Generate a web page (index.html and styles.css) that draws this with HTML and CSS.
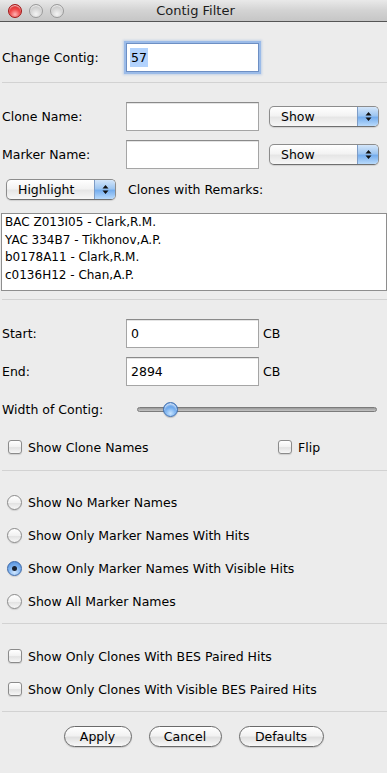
FILE: index.html
```html
<!DOCTYPE html>
<html lang="en">
<head>
    <meta charset="UTF-8">
    <meta name="viewport" content="width=device-width, initial-scale=1.0">
    <title>Contig Filter</title>
    <link rel="stylesheet" href="styles.css">
</head>
<body>
    <div class="window">
        <div class="titlebar">
            <div class="lights">
                <span class="light light-close"></span>
                <span class="light"></span>
                <span class="light"></span>
            </div>
            <div class="title">Contig Filter</div>
        </div>

        <div class="content">
            <div class="row row-contig">
                <div class="label">Change Contig:</div>
                <div class="field field-focus"><span class="selected">57</span></div>
            </div>
            <div class="sep sep-top"></div>

            <div class="row row-clone">
                <div class="label">Clone Name:</div>
                <div class="field"></div>
                <div class="popup popup-show">
                    <span class="popup-text">Show</span>
                    <span class="popup-arrows">
                        <svg width="7" height="11" viewBox="0 0 7 11"><path d="M3.5 1 L6.5 4.5 L0.5 4.5 Z M0.5 6.5 L6.5 6.5 L3.5 10 Z" fill="#111"/></svg>
                    </span>
                </div>
            </div>
            <div class="row row-marker">
                <div class="label">Marker Name:</div>
                <div class="field"></div>
                <div class="popup popup-show">
                    <span class="popup-text">Show</span>
                    <span class="popup-arrows">
                        <svg width="7" height="11" viewBox="0 0 7 11"><path d="M3.5 1 L6.5 4.5 L0.5 4.5 Z M0.5 6.5 L6.5 6.5 L3.5 10 Z" fill="#111"/></svg>
                    </span>
                </div>
            </div>
            <div class="row row-highlight">
                <div class="popup popup-highlight">
                    <span class="popup-text">Highlight</span>
                    <span class="popup-arrows">
                        <svg width="7" height="11" viewBox="0 0 7 11"><path d="M3.5 1 L6.5 4.5 L0.5 4.5 Z M0.5 6.5 L6.5 6.5 L3.5 10 Z" fill="#111"/></svg>
                    </span>
                </div>
                <div class="remarks-label">Clones with Remarks:</div>
            </div>
            <div class="remarks">
                <div>BAC Z013I05 - Clark,R.M.</div>
                <div>YAC 334B7 - Tikhonov,A.P.</div>
                <div>b0178A11 - Clark,R.M.</div>
                <div>c0136H12 - Chan,A.P.</div>
            </div>
            <div class="sep sep-remarks"></div>

            <div class="row row-start">
                <div class="label">Start:</div>
                <div class="field"><span class="value">0</span></div>
                <div class="unit">CB</div>
            </div>
            <div class="row row-end">
                <div class="label">End:</div>
                <div class="field"><span class="value">2894</span></div>
                <div class="unit">CB</div>
            </div>
            <div class="row row-slider">
                <div class="label">Width of Contig:</div>
                <div class="track">
                    <span class="knob"></span>
                </div>
            </div>
            <div class="row row-checks">
                <div class="check check-wide"><span class="box"></span>Show Clone Names</div>
                <div class="check"><span class="box"></span>Flip</div>
            </div>
            <div class="sep sep-checks"></div>

            <div class="radios">
                <div class="check"><span class="radio"></span>Show No Marker Names</div>
                <div class="check"><span class="radio"></span>Show Only Marker Names With Hits</div>
                <div class="check"><span class="radio radio-on"></span>Show Only Marker Names With Visible Hits</div>
                <div class="check"><span class="radio"></span>Show All Marker Names</div>
            </div>
            <div class="sep sep-radios"></div>

            <div class="bes">
                <div class="check"><span class="box"></span>Show Only Clones With BES Paired Hits</div>
                <div class="check"><span class="box"></span>Show Only Clones With Visible BES Paired Hits</div>
            </div>
            <div class="sep sep-bes"></div>

            <div class="buttons">
                <span class="button button-apply">Apply</span>
                <span class="button button-cancel">Cancel</span>
                <span class="button button-defaults">Defaults</span>
            </div>
        </div>
    </div>
</body>
</html>
```

FILE: styles.css
```css
body {
    margin: 0;
    padding: 0;
    background-color: #ececec;
}

.window {
    width: 387px;
    height: 773px;
    overflow: hidden;
    background-color: #ececec;
    font-family: "DejaVu Sans", sans-serif;
    font-size: 12.5px;
    color: #000;
}

/* title bar */

.titlebar {
    position: relative;
    height: 21px;
    border-bottom: 1px solid #555;
    background: linear-gradient(#e9e9e9, #d3d3d3 50%, #c6c6c6);
    display: flex;
    align-items: center;
    justify-content: center;
}

.title {
    font-size: 13px;
    color: #1c1c1c;
    padding-left: 4px;
}

.lights {
    position: absolute;
    left: 8px;
    top: 4px;
    display: flex;
    gap: 7px;
}

.light {
    width: 14px;
    height: 14px;
    box-sizing: border-box;
    border-radius: 50%;
    border: 1px solid #9a9a9a;
    background: radial-gradient(circle at 50% 75%, #f4f4f4 0%, #d2d2d2 55%, #b8b8b8 100%);
    box-shadow: inset 0 1px 1px rgba(255, 255, 255, 0.8);
}

.light-close {
    border-color: #a11515;
    background: radial-gradient(circle at 50% 78%, #ffb3b3 0%, #f04a4a 45%, #c81414 100%);
}

/* content */

.content {
    padding-left: 2px;
}

.row {
    display: flex;
    align-items: center;
}

.label {
    width: 124px;
    flex: none;
}

.field {
    width: 133px;
    height: 29px;
    box-sizing: border-box;
    flex: none;
    background-color: #fff;
    border: 1px solid #a5a5a5;
    border-top-color: #8a8a8a;
    box-shadow: inset 0 1px 0 #e4e4e4;
    display: flex;
    align-items: center;
    padding-left: 4px;
}

.field-focus {
    border-color: #6d8fc4;
    box-shadow: 0 0 0 2px #9bbbe8, 0 0 2px 3px rgba(120, 160, 220, 0.35);
}

.selected {
    background-color: #b3d3fd;
    padding: 2px 1px;
    margin-left: -1px;
}

.unit {
    margin-left: 4px;
}

.sep {
    height: 1px;
    background-color: #d2d2d2;
}

/* row spacing */

.row-contig { margin-top: 21px; }
.sep-top { margin-top: 10px; }
.row-clone { margin-top: 19px; }
.row-marker { margin-top: 9px; }
.row-highlight { margin-top: 10px; height: 21px; }
.sep-remarks { margin-top: 8px; }
.row-start { margin-top: 19px; }
.row-end { margin-top: 9px; }
.row-slider { margin-top: 13px; height: 20px; }
.row-checks { margin-top: 18px; height: 20px; }
.sep-checks { margin-top: 13px; }
.sep-radios { margin-top: 12px; }
.sep-bes { margin-top: 12px; }

/* popups */

.popup {
    height: 21px;
    box-sizing: border-box;
    flex: none;
    display: flex;
    border: 1px solid #8c8c8c;
    border-bottom-color: #6f6f6f;
    border-radius: 5px;
    overflow: hidden;
    background: linear-gradient(#ffffff, #f3f3f3 45%, #e6e6e6 55%, #f7f7f7);
    box-shadow: 0 1px 1px rgba(0, 0, 0, 0.12);
}

.popup-text {
    flex: 1;
    padding-left: 11px;
    line-height: 19px;
}

.popup-arrows {
    width: 20px;
    display: flex;
    align-items: center;
    justify-content: center;
    border-left: 1px solid #7d9cc6;
    background: linear-gradient(#d4e6fa, #9ec6f1 45%, #76aeee 55%, #b9dafb);
}

.popup-show {
    width: 110px;
    margin-left: 10px;
}

.popup-highlight {
    width: 110px;
    margin-left: 4px;
}

.remarks-label {
    margin-left: 12px;
}

/* remarks list */

.remarks {
    margin-top: 13px;
    margin-left: -1px;
    height: 78px;
    box-sizing: border-box;
    background-color: #fff;
    border: 1px solid #8e8e8e;
    padding: 0 3px;
    font-size: 12px;
    line-height: 17.5px;
}

/* slider */

.track {
    position: relative;
    width: 240px;
    height: 5px;
    box-sizing: border-box;
    margin-left: 11px;
    border: 1px solid #7b7b7b;
    border-radius: 3px;
    background: linear-gradient(#9a9a9a, #c4c4c4);
}

.knob {
    position: absolute;
    left: 25px;
    top: -6px;
    width: 15px;
    height: 15px;
    box-sizing: border-box;
    border-radius: 50%;
    border: 1px solid #3f6fb0;
    background: radial-gradient(circle at 50% 80%, #c7e4ff 0%, #6ea9ec 50%, #3b7ed6 100%);
    box-shadow: inset 0 2px 2px rgba(255, 255, 255, 0.7), 0 1px 1px rgba(0, 0, 0, 0.2);
}

/* checkboxes and radios */

.check {
    display: flex;
    align-items: center;
    height: 20px;
    padding-left: 6px;
}

.check-wide {
    width: 264px;
    flex: none;
}

.box,
.radio {
    width: 14px;
    height: 14px;
    box-sizing: border-box;
    flex: none;
    margin-right: 6px;
    border: 1px solid #8b8b8b;
    background: linear-gradient(#ffffff, #f1f1f1 50%, #e2e2e2 55%, #f7f7f7);
    box-shadow: 0 1px 1px rgba(0, 0, 0, 0.12);
}

.box {
    border-radius: 3px;
}

.radio {
    width: 15px;
    height: 15px;
    margin-left: -1px;
    border-radius: 50%;
}

.radio-on {
    position: relative;
    border-color: #3c68a8;
    background: radial-gradient(circle at 50% 80%, #cfe6ff 0%, #7eb2ee 50%, #4a87d6 100%);
}

.radio-on::after {
    content: "";
    position: absolute;
    left: 4px;
    top: 4px;
    width: 5px;
    height: 5px;
    border-radius: 50%;
    background-color: #1a2230;
}

.radios {
    margin-top: 21px;
    display: flex;
    flex-direction: column;
    gap: 13px;
}

.bes {
    margin-top: 22px;
    display: flex;
    flex-direction: column;
    gap: 13px;
}

/* buttons */

.buttons {
    margin-top: 14px;
    display: flex;
    justify-content: center;
    gap: 17px;
    padding-right: 2px;
}

.button {
    height: 21px;
    box-sizing: border-box;
    display: flex;
    align-items: center;
    justify-content: center;
    border: 1px solid #6a6a6a;
    border-radius: 11px;
    background: linear-gradient(#ffffff, #f2f2f2 45%, #e0e0e0 55%, #f8f8f8);
    box-shadow: 0 1px 1px rgba(0, 0, 0, 0.15);
}

.button-apply { width: 68px; }
.button-cancel { width: 73px; }
.button-defaults { width: 85px; }
```
